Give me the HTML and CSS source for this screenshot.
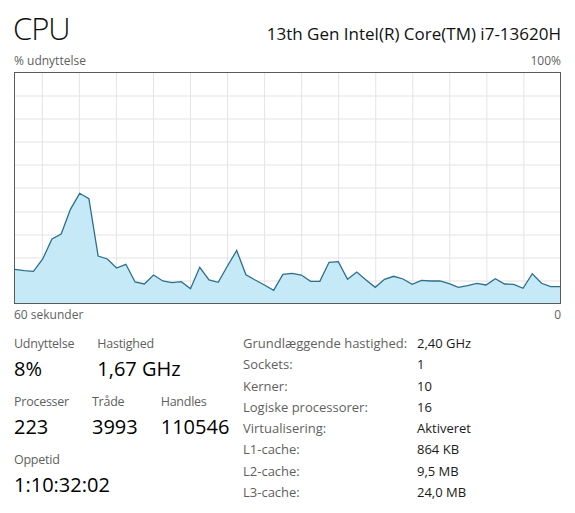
FILE: index.html
```html
<!DOCTYPE html>
<html>
<head>
    <meta charset="utf-8">
    <title>CPU - Jobliste</title>
    <link rel="stylesheet" href="styles.css">
</head>

<body>
    <div class="page">
        <div class="head">
            <h1>CPU</h1>
            <span class="model">13th Gen Intel(R) Core(TM) i7-13620H</span>
        </div>

        <div class="axis axis_top">
            <span>% udnyttelse</span>
            <span>100%</span>
        </div>

        <div class="graph">
            <svg viewBox="0 0 59 230" preserveAspectRatio="none">
                <g class="grid">
                    <line x1="0" y1="23" x2="59" y2="23"/>
                    <line x1="0" y1="46" x2="59" y2="46"/>
                    <line x1="0" y1="69" x2="59" y2="69"/>
                    <line x1="0" y1="92" x2="59" y2="92"/>
                    <line x1="0" y1="115" x2="59" y2="115"/>
                    <line x1="0" y1="139" x2="59" y2="139"/>
                    <line x1="0" y1="162" x2="59" y2="162"/>
                    <line x1="0" y1="185" x2="59" y2="185"/>
                    <line x1="0" y1="208" x2="59" y2="208"/>
                    <line x1="2.96" y1="0" x2="2.96" y2="230"/>
                    <line x1="6.97" y1="0" x2="6.97" y2="230"/>
                    <line x1="10.98" y1="0" x2="10.98" y2="230"/>
                    <line x1="14.99" y1="0" x2="14.99" y2="230"/>
                    <line x1="19.0" y1="0" x2="19.0" y2="230"/>
                    <line x1="23.01" y1="0" x2="23.01" y2="230"/>
                    <line x1="27.02" y1="0" x2="27.02" y2="230"/>
                    <line x1="31.03" y1="0" x2="31.03" y2="230"/>
                    <line x1="35.04" y1="0" x2="35.04" y2="230"/>
                    <line x1="39.05" y1="0" x2="39.05" y2="230"/>
                    <line x1="43.06" y1="0" x2="43.06" y2="230"/>
                    <line x1="47.07" y1="0" x2="47.07" y2="230"/>
                    <line x1="51.08" y1="0" x2="51.08" y2="230"/>
                    <line x1="55.09" y1="0" x2="55.09" y2="230"/>
                </g>
                <polygon class="area" points="0,230 0,196.3 1,197.7 2,198.3 3,186 4,166 5,161 6,136.3 7,120.3 8,125.7 9,183 10,186 11,195 12,191.3 13,209 14,211 15,202 16,208 17,209.7 18,208.7 19,215.7 20,194.3 21,207 22,209.3 23,193 24,177.5 25,201.7 26,207 27,212 28,217.3 29,201.3 30,200.3 31,202 32,208.3 33,208.3 34,189.3 35,188.7 36,206.3 37,199 38,207 39,214.3 40,206.3 41,203.3 42,206 43,211.3 44,207.3 45,208 46,208 47,210.7 48,214.3 49,212.7 50,210.3 51,212 52,205.7 53,211 54,211.3 55,215.3 56,200.7 57,210.3 58,213.7 59,213.7 59,230"/>
                <polyline class="line" points="0,196.3 1,197.7 2,198.3 3,186 4,166 5,161 6,136.3 7,120.3 8,125.7 9,183 10,186 11,195 12,191.3 13,209 14,211 15,202 16,208 17,209.7 18,208.7 19,215.7 20,194.3 21,207 22,209.3 23,193 24,177.5 25,201.7 26,207 27,212 28,217.3 29,201.3 30,200.3 31,202 32,208.3 33,208.3 34,189.3 35,188.7 36,206.3 37,199 38,207 39,214.3 40,206.3 41,203.3 42,206 43,211.3 44,207.3 45,208 46,208 47,210.7 48,214.3 49,212.7 50,210.3 51,212 52,205.7 53,211 54,211.3 55,215.3 56,200.7 57,210.3 58,213.7 59,213.7"/>
            </svg>
        </div>

        <div class="axis axis_bottom">
            <span>60 sekunder</span>
            <span>0</span>
        </div>

        <div class="details">
            <div class="stats">
                <div class="stat_row">
                    <div class="stat">
                        <div class="stat_label">Udnyttelse</div>
                        <div class="stat_value">8%</div>
                    </div>
                    <div class="stat">
                        <div class="stat_label">Hastighed</div>
                        <div class="stat_value">1,67 GHz</div>
                    </div>
                </div>
                <div class="stat_row">
                    <div class="stat">
                        <div class="stat_label">Processer</div>
                        <div class="stat_value">223</div>
                    </div>
                    <div class="stat">
                        <div class="stat_label">Tråde</div>
                        <div class="stat_value">3993</div>
                    </div>
                    <div class="stat">
                        <div class="stat_label">Handles</div>
                        <div class="stat_value">110546</div>
                    </div>
                </div>
                <div class="stat_row">
                    <div class="stat">
                        <div class="stat_label">Oppetid</div>
                        <div class="stat_value">1:10:32:02</div>
                    </div>
                </div>
            </div>

            <table class="specs">
                <tr><td>Grundlæggende hastighed:</td><td>2,40 GHz</td></tr>
                <tr><td>Sockets:</td><td>1</td></tr>
                <tr><td>Kerner:</td><td>10</td></tr>
                <tr><td>Logiske processorer:</td><td>16</td></tr>
                <tr><td>Virtualisering:</td><td>Aktiveret</td></tr>
                <tr><td>L1-cache:</td><td>864 KB</td></tr>
                <tr><td>L2-cache:</td><td>9,5 MB</td></tr>
                <tr><td>L3-cache:</td><td>24,0 MB</td></tr>
            </table>
        </div>
    </div>
</body>
</html>
```

FILE: styles.css
```css
body{
    margin: 0;
    background-color: #fff;
    font-family: "Open Sans", "Noto Sans", sans-serif;
    color: #000;
}
.page{
    padding: 8px 14px 0 14px;
}

.head{
    display: flex;
    justify-content: space-between;
    align-items: baseline;
}
h1{
    margin: 0 0 0 -1px;
    font-size: 31px;
    font-weight: 300;
    letter-spacing: -1px;
    line-height: 40px;
    color: #111;
}
.model{
    font-size: 17px;
    color: #111;
}

.axis{
    display: flex;
    justify-content: space-between;
    font-size: 12px;
    line-height: 16px;
    color: #5f5f5f;
}
.axis_top{ margin-top: 5px; }
.axis_bottom{ margin-top: 3px; }

.graph{
    margin-top: 3px;
    height: 232px;
    box-sizing: border-box;
    border: 1px solid #5a5a5a;
}
.graph svg{
    display: block;
    width: 100%;
    height: 100%;
}
.grid line{
    stroke: #e4e4e4;
    stroke-width: 1;
    vector-effect: non-scaling-stroke;
}
.area{
    fill: #c5e9f7;
}
.line{
    fill: none;
    stroke: #2c6f8c;
    stroke-width: 1.3;
    vector-effect: non-scaling-stroke;
}

.details{
    display: flex;
    align-items: flex-start;
    margin-top: 12px;
}
.stats{
    width: 229px;
    display: flex;
    flex-direction: column;
    gap: 11px;
}
.stat_row{
    display: flex;
    gap: 23px;
}
.stat_label{
    font-size: 12.5px;
    letter-spacing: -0.25px;
    line-height: 17px;
    color: #5f5f5f;
}
.stat_value{
    margin-top: 4px;
    font-size: 20px;
    line-height: 26px;
}

.specs{
    margin-top: -2px;
    border-collapse: collapse;
    font-size: 13px;
    line-height: 21.25px;
}
.specs td{
    padding: 0;
    color: #1a1a1a;
}
.specs td:first-child{
    width: 174px;
    color: #5f5f5f;
}
```
